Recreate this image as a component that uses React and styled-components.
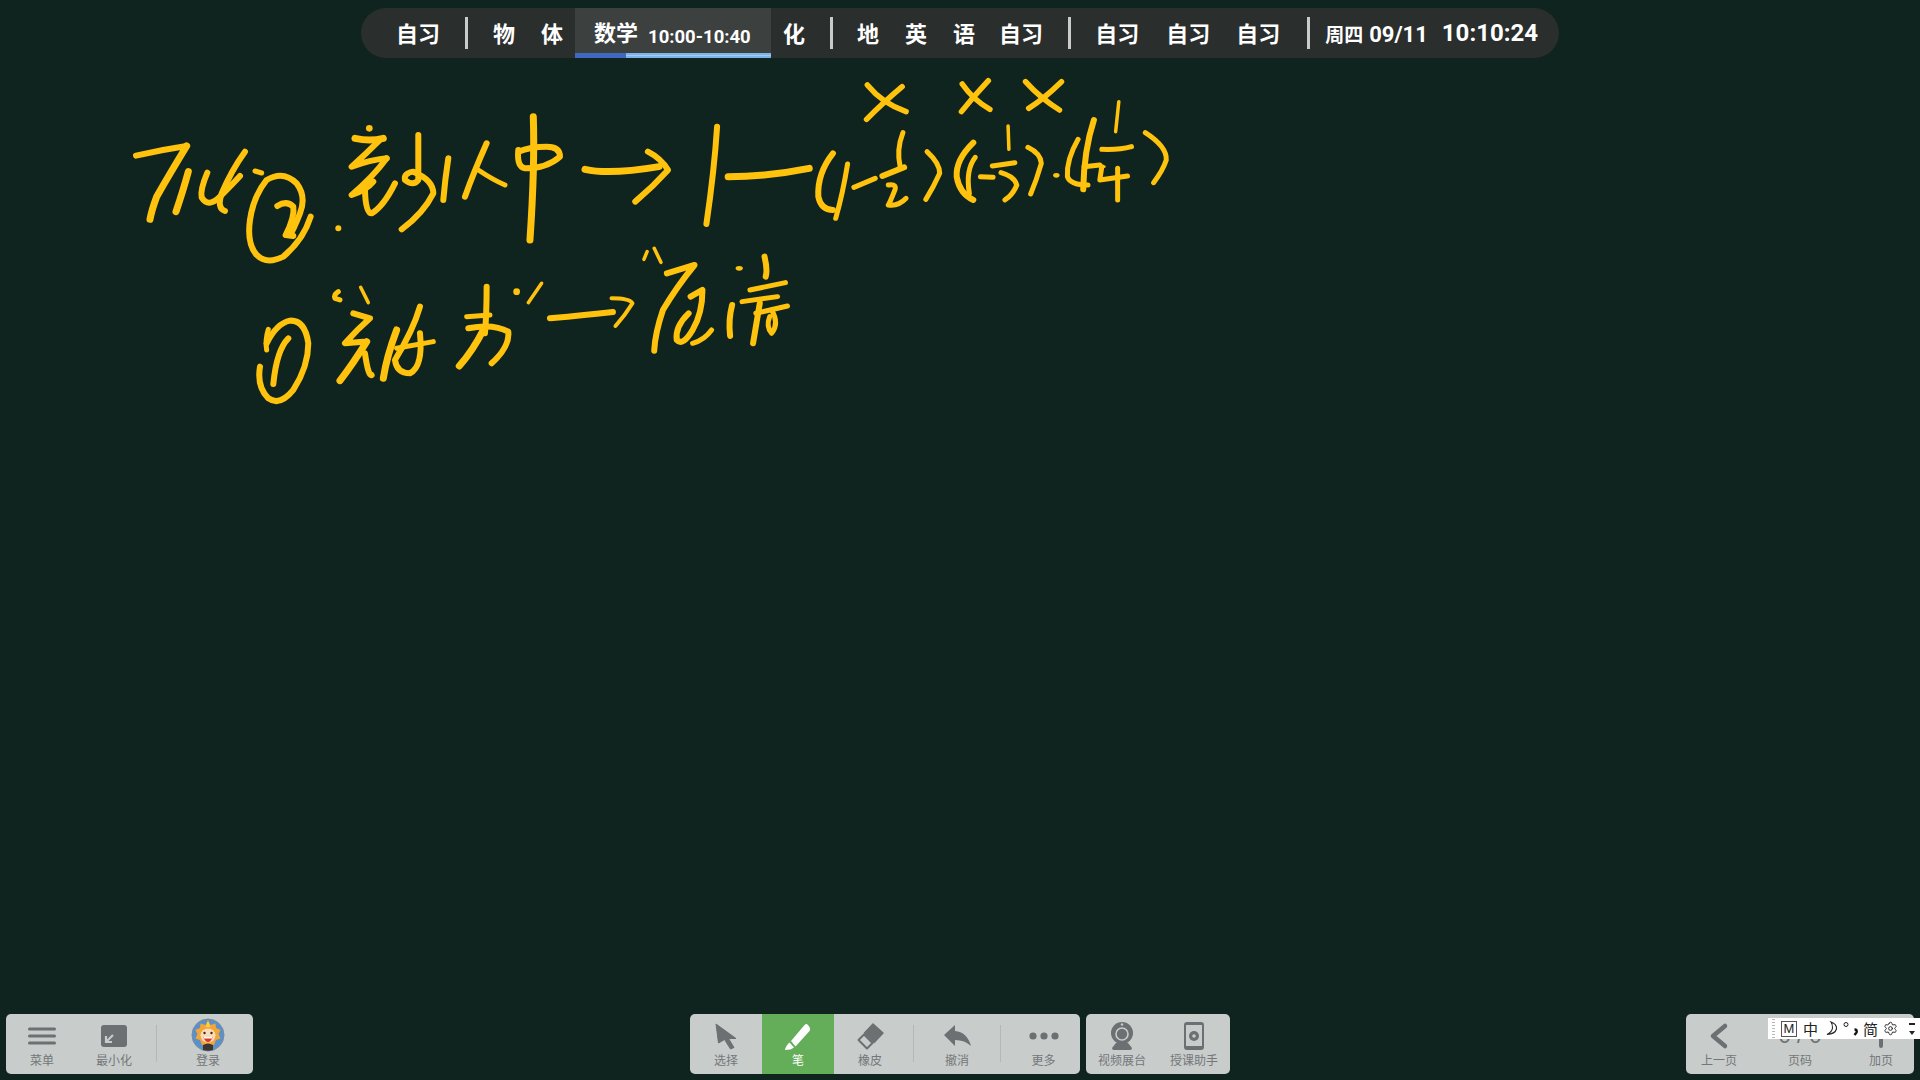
import React from "react";
import styled, { createGlobalStyle } from "styled-components";
import { Settings } from "lucide-react";

const GlobalStyle = createGlobalStyle`
    html, body {
        margin: 0;
        padding: 0;
        background: #10241f;
        overflow: hidden;
    }
`;

const Page = styled.div`
    position: relative;
    width: 1920px;
    height: 1080px;
    display: flex;
    flex-direction: column;
    justify-content: space-between;
    font-family: "Noto Sans CJK SC", "Noto Sans", sans-serif;
    background: #10241f;
`;

const InkLayer = styled.svg`
    position: absolute;
    left: 0;
    top: 0;
    width: 1920px;
    height: 1080px;
    pointer-events: none;

    path {
        fill: none;
        stroke: #ffc30d;
        stroke-linecap: round;
        stroke-linejoin: round;
        vector-effect: non-scaling-stroke;
    }

    circle {
        fill: #ffc30d;
    }
`;

const ScheduleBar = styled.div`
    align-self: flex-start;
    margin: 8px 0 0 361px;
    width: 1198px;
    height: 50px;
    box-sizing: border-box;
    padding-left: 35px;
    display: flex;
    align-items: center;
    background: #2a2e2d;
    border-radius: 25px;
    color: #fff;
    font-weight: 700;
    font-size: 22px;
    overflow: hidden;
`;

const Period = styled.span`
    margin-left: ${({ $gap }) => $gap || 0}px;
    line-height: 48px;
    padding-bottom: 2px;
    white-space: nowrap;
`;

const BarDivider = styled.span`
    margin-left: ${({ $gap }) => $gap}px;
    width: 3px;
    height: 32px;
    background: #c9cccb;
    flex: none;
`;

const CurrentPeriod = styled.div`
    margin-left: ${({ $gap }) => $gap}px;
    width: 196px;
    height: 50px;
    display: flex;
    flex-direction: column;
    background: #3c403f;
    flex: none;
`;

const CurrentLabel = styled.div`
    height: 45px;
    box-sizing: border-box;
    padding: 1px 0 0 19px;
    display: flex;
    align-items: center;
    white-space: nowrap;
`;

const CurrentTime = styled.span`
    margin-left: 10px;
    font-family: "Roboto", sans-serif;
    font-size: 18.5px;
    font-weight: 700;
    padding-top: 11px;
`;

const Progress = styled.div`
    height: 5px;
    display: flex;
    background: repeating-linear-gradient(
        to bottom,
        #7db3ea 0,
        #7db3ea 2px,
        #a4cbef 2px,
        #a4cbef 3px
    );
`;

const ProgressDone = styled.div`
    background: #4068c0;
`;

const DateText = styled.span`
    margin-left: ${({ $gap }) => $gap}px;
    font-size: 19px;
    white-space: nowrap;
`;

const DateDigits = styled.span`
    margin-left: 6px;
    font-family: "Roboto", sans-serif;
    font-size: 22px;
`;

const ClockText = styled.span`
    margin-left: 14px;
    font-family: "Roboto", sans-serif;
    font-size: 24px;
    white-space: nowrap;
`;

const BottomRow = styled.div`
    display: flex;
    align-items: flex-end;
    padding: 0 6px 6px;
`;

const ToolGroup = styled.div`
    display: flex;
    height: 60px;
    margin-left: ${({ $gap }) => ($gap === "auto" ? "auto" : `${$gap || 0}px`)};
    background: #c8ccca;
    border-radius: 5px;
    overflow: hidden;
`;

const Tool = styled.div`
    width: ${({ $w }) => $w || 72}px;
    box-sizing: border-box;
    padding-top: 3px;
    padding-left: ${({ $shift }) => $shift || 0}px;
    display: flex;
    flex-direction: column;
    align-items: center;
    flex: none;
    background: ${({ $active }) => ($active ? "#64ae5a" : "transparent")};
    color: ${({ $active }) => ($active ? "#fff" : "#73777a")};
`;

const ToolIcon = styled.svg`
    display: block;
    width: 36px;
    height: 35px;
    flex: none;
`;

const PageCount = styled.div`
    height: 35px;
    line-height: 38px;
    font-family: "Liberation Sans", sans-serif;
    font-size: 22px;
    color: #6c7072;
    white-space: nowrap;
`;

const ToolLabel = styled.span`
    font-size: 12px;
    line-height: 16px;
    white-space: nowrap;
`;

const ToolDivider = styled.span`
    width: 1px;
    height: 37px;
    margin: 11px 0 0 ${({ $gap }) => $gap || 0}px;
    background: #b4b8b6;
    flex: none;
`;

const ImeBar = styled.div`
    position: absolute;
    right: 0;
    top: 1018px;
    width: 152px;
    height: 21px;
    display: flex;
    align-items: center;
    background: #fff;
    color: #222;
    font-size: 15px;
    line-height: 21px;
    overflow: hidden;
`;

const ImeHandle = styled.span`
    width: 3px;
    height: 19px;
    margin-left: 4px;
    background: repeating-linear-gradient(
        to bottom,
        #b9b9b9 0,
        #b9b9b9 1px,
        transparent 1px,
        transparent 3px
    );
    flex: none;
`;

const ImeMode = styled.span`
    width: 14px;
    height: 14px;
    margin-left: 6px;
    border: 1px solid #555;
    font-family: "Liberation Sans", sans-serif;
    font-size: 13px;
    line-height: 14px;
    text-align: center;
    flex: none;
`;

const ImeGlyph = styled.span`
    margin-left: ${({ $gap }) => $gap}px;
    flex: none;
`;

const ImeIcon = styled.svg`
    margin-left: ${({ $gap }) => $gap}px;
    flex: none;
`;

const ImeGear = styled(Settings)`
    margin-left: 5px;
    flex: none;
`;

const ImeMenu = styled.span`
    margin-left: 10px;
    width: 7px;
    height: 12px;
    display: flex;
    flex-direction: column;
    justify-content: space-between;
    align-items: center;
    flex: none;

    &::before {
        content: "";
        width: 6px;
        height: 2px;
        background: #222;
    }

    &::after {
        content: "";
        border-left: 3px solid transparent;
        border-right: 3px solid transparent;
        border-top: 4px solid #222;
    }
`;

// first part of the ink, traced in 3x crop coordinates
const inkLeft = [
    // 7.14
    ["M48 167Q120 150 200 138", 6],
    ["M200 138Q150 220 110 290Q95 330 90 358", 7],
    ["M205 215Q190 270 168 335", 7],
    ["M262 218Q240 270 245 292Q265 325 300 290Q340 250 360 228", 6],
    ["M375 155Q335 210 305 280Q290 325 315 333", 6],
    ["M405 213L425 219", 5],
    // circled 2
    ["M572 350Q550 420 490 470Q440 495 410 465Q380 430 390 360Q400 290 440 240Q490 210 530 250Q560 290 540 340Q520 390 510 405", 6],
    ["M472 318Q500 300 520 320Q525 350 497 405L520 408", 6],
    // first line of characters
    ["M705 115Q750 125 790 115", 7],
    ["M780 120Q740 160 695 200Q750 180 800 175", 6],
    ["M800 175Q760 230 695 285Q740 270 760 245", 6],
    ["M735 260Q735 340 755 340Q790 320 825 250", 6],
    ["M895 105Q895 200 895 240Q880 260 855 240Q850 220 880 215Q940 240 940 280Q910 340 845 388", 6],
    ["M985 175Q975 240 970 300", 6],
    ["M1100 130Q1060 220 1035 290", 6],
    ["M1075 210Q1120 240 1155 255", 5],
    ["M1240 50Q1245 200 1230 420", 7],
    ["M1195 150Q1190 200 1215 205Q1280 205 1320 170Q1320 140 1280 140Q1230 140 1195 155", 6],
    // second line
    ["M655 575Q640 585 645 595L660 600", 5],
    ["M722 562L745 608", 3.5],
    ["M420 800Q410 860 445 895Q480 920 520 870Q565 800 565 730Q555 660 510 662Q470 670 440 730", 6],
    ["M445 688Q435 720 440 750", 5],
    ["M505 715Q470 750 460 852", 6],
    ["M700 640L750 655Q710 690 675 730L730 725", 6],
    ["M740 725Q700 790 660 842", 7],
    ["M735 760Q745 830 755 825", 6],
    ["M830 690Q800 770 790 835", 7],
    ["M900 620Q880 690 825 780Q830 820 870 820Q910 800 900 700", 6],
    ["M830 745L940 725", 5],
    ["M1100 560Q1100 640 1095 700", 6],
    ["M1040 650L1110 645", 5],
    ["M1045 685Q1120 670 1165 695Q1170 740 1115 790", 6],
    ["M1090 690Q1060 750 1018 798", 7],
    ["M1265 550L1225 608", 3.5],
    ["M1290 655Q1400 645 1479 636", 6],
];

const inkLeftDots = [
    [748, 85, 10],
    [655, 385, 9],
    [1190, 575, 10],
];

// second part, crop was squeezed on x so it gets its own scale
const inkRight = [
    // arrow
    ["M38 298Q100 315 225 290", 7],
    ["M197 245Q230 265 248 300Q210 350 165 395", 6],
    ["M372 170Q365 300 345 462", 6],
    ["M400 320Q500 320 605 295", 7],
    // (1 - 1/2)
    ["M665 250Q625 310 628 380Q635 420 665 420", 6],
    ["M702 282Q690 370 672 445", 5],
    ["M718 352L772 325", 5],
    ["M842 188Q825 240 835 290", 5],
    ["M790 318L845 292", 6],
    ["M805 345Q830 340 820 365Q810 395 805 405Q830 410 850 385", 5],
    ["M903 245Q935 280 935 310Q920 350 900 388", 5],
    // crosses
    ["M752 45Q790 100 850 125", 5.5],
    ["M840 50Q790 100 750 148", 5.5],
    ["M992 42Q1020 90 1062 118", 5.5],
    ["M1058 32Q1020 80 990 125", 5.5],
    ["M1152 35Q1190 85 1238 120", 5.5],
    ["M1243 35Q1200 85 1160 115", 5.5],
    // (1 - 1/3)
    ["M1020 218Q975 270 978 320Q985 370 1020 390", 6],
    ["M1025 262Q1000 300 1010 370", 5],
    ["M1038 320L1070 322", 5],
    ["M1108 168L1110 238", 3.5],
    ["M1068 288L1125 278", 5],
    ["M1090 308Q1125 320 1130 345Q1120 375 1100 390", 5],
    ["M1158 232Q1190 250 1192 280Q1180 330 1165 372", 5],
    // (1 - 1/4)
    ["M1285 208Q1255 270 1258 320Q1265 345 1310 345", 5],
    ["M1325 150Q1300 240 1298 358", 6],
    ["M1300 290L1340 285", 5],
    ["M1388 95L1380 185", 3.5],
    ["M1345 238Q1390 240 1420 230", 5],
    ["M1345 290L1340 330L1410 318", 5],
    ["M1385 295L1385 390", 5],
    ["M1455 188Q1510 230 1508 270Q1500 300 1476 338", 5],
    // second line, right side
    ["M105 685Q150 685 158 700Q140 735 115 768", 4],
    ["M195 545L187 568", 3.5],
    ["M213 535L230 577", 3.5],
    ["M245 610L315 585Q270 650 235 720Q215 790 213 842", 6],
    ["M305 680L335 660Q335 730 310 780Q285 830 270 810Q265 770 300 730", 6],
    ["M310 820Q340 810 358 780", 5],
    ["M410 705Q400 750 405 798", 6],
    ["M492 560Q500 600 495 620", 6],
    ["M455 660L545 638", 5],
    ["M435 695L525 680", 5],
    ["M480 700Q470 770 463 820", 6],
    ["M470 730L550 708", 5],
    ["M510 720Q530 760 510 790Q495 770 505 740", 5],
];

const Ink = () => (
    <InkLayer viewBox="0 0 1920 1080">
        <g transform="translate(120 100) scale(0.3333)">
            {inkLeft.map(([d, w]) => (
                <path key={d} d={d} strokeWidth={w} />
            ))}
            {inkLeftDots.map(([cx, cy, r]) => (
                <circle key={cx} cx={cx} cy={cy} r={r} />
            ))}
        </g>
        <g transform="translate(570 70) scale(0.3954 0.3333)">
            {inkRight.map(([d, w]) => (
                <path key={d} d={d} strokeWidth={w} />
            ))}
            <ellipse cx="1230" cy="316" rx="8" ry="7" fill="#ffc30d" />
            <ellipse cx="1350" cy="290" rx="5" ry="4" fill="#ffc30d" />
            <ellipse cx="428" cy="595" rx="9" ry="7" fill="#ffc30d" />
        </g>
    </InkLayer>
);

const Schedule = () => (
    <ScheduleBar>
        <Period>自习</Period>
        <BarDivider $gap={25} />
        <Period $gap={25}>物</Period>
        <Period $gap={26}>体</Period>
        <CurrentPeriod $gap={12}>
            <CurrentLabel>
                数学
                <CurrentTime>10:00-10:40</CurrentTime>
            </CurrentLabel>
            <Progress>
                <ProgressDone style={{ width: `${(51 / 196) * 100}%` }} />
            </Progress>
        </CurrentPeriod>
        <Period $gap={12}>化</Period>
        <BarDivider $gap={25} />
        <Period $gap={24}>地</Period>
        <Period $gap={26}>英</Period>
        <Period $gap={26}>语</Period>
        <Period $gap={24}>自习</Period>
        <BarDivider $gap={25} />
        <Period $gap={24}>自习</Period>
        <Period $gap={27}>自习</Period>
        <Period $gap={26}>自习</Period>
        <BarDivider $gap={27} />
        <DateText $gap={15}>
            周四
            <DateDigits>09/11</DateDigits>
        </DateText>
        <ClockText>10:10:24</ClockText>
    </ScheduleBar>
);

const ICON_GRAY = "#6c7072";
const PANEL = "#c8ccca";

const Icon = ({ children }) => <ToolIcon viewBox="0 0 36 35">{children}</ToolIcon>;

const MenuIcon = () => (
    <Icon>
        <path
            d="M5.5 12H30.5M5.5 19H30.5M5.5 26H30.5"
            stroke={ICON_GRAY}
            strokeWidth="3"
            strokeLinecap="round"
        />
    </Icon>
);

const MinimizeIcon = () => (
    <Icon>
        <rect x="5" y="8" width="26" height="22" rx="3" fill={ICON_GRAY} />
        <path d="M17 18L10.5 24.5M10 19V25H16" fill="none" stroke={PANEL} strokeWidth="2.2" />
    </Icon>
);

const AvatarIcon = () => (
    <Icon>
        <circle cx="18" cy="18" r="16" fill="#5a90cb" stroke="#7b8c9c" strokeWidth="1" />
        <path
            d="M18 3L20.5 8L25.5 6.5L26 11L30.5 13L28.5 17L30.5 21.5L26 23L24 28H12L10 23L5.5 21.5L7.5 17L5.5 13L10 11L10.5 6.5L15.5 8Z"
            fill="#f6a534"
        />
        <path d="M18 4L20.5 10H15.5Z" fill="#fdd23c" />
        <ellipse cx="18" cy="18.5" rx="7.5" ry="7" fill="#fbdcb8" />
        <circle cx="14.5" cy="16" r="1.2" fill="#3a2a20" />
        <circle cx="21.5" cy="16" r="1.2" fill="#3a2a20" />
        <path d="M13.5 20H22.5Q21 25 18 25Q15 25 13.5 20Z" fill="#d8352f" />
        <path d="M14 20H22V21.5H14Z" fill="#fff" />
        <path d="M13 33V28Q18 25 23 28V33Q18 34.5 13 33Z" fill="#3b3430" />
    </Icon>
);

const SelectIcon = () => (
    <Icon>
        <path
            d="M8 7L28 21.5L20.5 21.5L26 30.5L22.5 32L16.5 22.5L10.5 26Z"
            fill={ICON_GRAY}
            stroke={ICON_GRAY}
            strokeWidth="1"
            strokeLinejoin="round"
        />
    </Icon>
);

const PenIcon = () => (
    <Icon>
        <path
            d="M11 24L25 7.5Q26.5 6.5 28 8L30 11Q30.5 12.5 29.5 14L15.5 29.5Z"
            fill="#fff"
        />
        <path d="M9.5 25.5L14 30.5Q11 33 5 33Q6 28 9.5 25.5Z" fill="#fff" />
    </Icon>
);

const EraserIcon = () => (
    <Icon>
        <path
            d="M12.5 16L21 7L31 16L22 25.5Z"
            fill={ICON_GRAY}
            stroke={ICON_GRAY}
            strokeWidth="1.5"
            strokeLinejoin="round"
        />
        <path
            d="M12 17.5L6.5 23L15 31.5L20.5 26Z"
            fill="none"
            stroke={ICON_GRAY}
            strokeWidth="2"
            strokeLinejoin="round"
        />
    </Icon>
);

const UndoIcon = () => (
    <Icon>
        <path d="M5 18L16 8V14Q28 15 32 29Q26 23 16 23V29Z" fill={ICON_GRAY} strokeLinejoin="round" />
    </Icon>
);

const MoreIcon = () => (
    <Icon>
        <circle cx="7" cy="19" r="3.6" fill={ICON_GRAY} />
        <circle cx="18" cy="19" r="3.6" fill={ICON_GRAY} />
        <circle cx="29" cy="19" r="3.6" fill={ICON_GRAY} />
    </Icon>
);

const WebcamIcon = () => (
    <Icon>
        <path d="M12 26H24L28 31Q28 33 26 33H10Q8 33 8 31Z" fill={ICON_GRAY} />
        <circle cx="18" cy="16" r="11" fill={ICON_GRAY} />
        <circle cx="18" cy="17" r="6" fill="none" stroke={PANEL} strokeWidth="1.6" />
        <circle cx="18" cy="7.5" r="1.2" fill={PANEL} />
    </Icon>
);

const TabletIcon = () => (
    <Icon>
        <rect x="8" y="5" width="20" height="28" rx="3" fill={ICON_GRAY} />
        <rect x="10" y="8" width="16" height="21" fill={PANEL} />
        <circle cx="18" cy="19" r="5" fill={ICON_GRAY} />
        <circle cx="18" cy="19" r="1.8" fill={PANEL} />
    </Icon>
);

const PrevIcon = () => (
    <Icon>
        <path
            d="M24 9L12 19L24 29"
            fill="none"
            stroke={ICON_GRAY}
            strokeWidth="4.5"
            strokeLinecap="round"
            strokeLinejoin="round"
        />
    </Icon>
);

const PlusIcon = () => (
    <Icon>
        <path d="M18 8V29M7 19H29" stroke={ICON_GRAY} strokeWidth="4" strokeLinecap="round" />
    </Icon>
);

const Toolbars = () => (
    <BottomRow>
        <ToolGroup>
            <Tool>
                <MenuIcon />
                <ToolLabel>菜单</ToolLabel>
            </Tool>
            <Tool>
                <MinimizeIcon />
                <ToolLabel>最小化</ToolLabel>
            </Tool>
            <ToolDivider $gap={6} />
            <Tool $w={96} $shift={6}>
                <AvatarIcon />
                <ToolLabel>登录</ToolLabel>
            </Tool>
        </ToolGroup>
        <ToolGroup $gap={437}>
            <Tool>
                <SelectIcon />
                <ToolLabel>选择</ToolLabel>
            </Tool>
            <Tool $active>
                <PenIcon />
                <ToolLabel>笔</ToolLabel>
            </Tool>
            <Tool>
                <EraserIcon />
                <ToolLabel>橡皮</ToolLabel>
            </Tool>
            <ToolDivider $gap={7} />
            <Tool $w={86}>
                <UndoIcon />
                <ToolLabel>撤消</ToolLabel>
            </Tool>
            <ToolDivider />
            <Tool $w={79} $shift={6}>
                <MoreIcon />
                <ToolLabel>更多</ToolLabel>
            </Tool>
        </ToolGroup>
        <ToolGroup $gap={6}>
            <Tool>
                <WebcamIcon />
                <ToolLabel>视频展台</ToolLabel>
            </Tool>
            <Tool>
                <TabletIcon />
                <ToolLabel>授课助手</ToolLabel>
            </Tool>
        </ToolGroup>
        <ToolGroup $gap="auto">
            <Tool $w={66}>
                <PrevIcon />
                <ToolLabel>上一页</ToolLabel>
            </Tool>
            <Tool $w={96}>
                <PageCount>0 / 0</PageCount>
                <ToolLabel>页码</ToolLabel>
            </Tool>
            <Tool $w={66}>
                <PlusIcon />
                <ToolLabel>加页</ToolLabel>
            </Tool>
        </ToolGroup>
    </BottomRow>
);

const Ime = () => (
    <ImeBar>
        <ImeHandle />
        <ImeMode>M</ImeMode>
        <ImeGlyph $gap={6}>中</ImeGlyph>
        <ImeIcon $gap={7} width="13" height="15" viewBox="0 0 13 15">
            <path
                d="M6 1Q12 3 11.5 8Q10 13 2 13.5Q7 11 7.5 7Q7.5 3 6 1Z"
                fill="none"
                stroke="#222"
                strokeWidth="1.1"
            />
        </ImeIcon>
        <ImeIcon $gap={5} width="16" height="15" viewBox="0 0 16 15">
            <circle cx="3" cy="3.5" r="2" fill="none" stroke="#222" strokeWidth="1" />
            <path d="M11.5 8.5Q14.5 8.5 13.5 11.5L11.5 14" fill="none" stroke="#111" strokeWidth="2.4" />
        </ImeIcon>
        <ImeGlyph $gap={4}>简</ImeGlyph>
        <ImeGear size={15} strokeWidth={1.5} color="#222" />
        <ImeMenu />
    </ImeBar>
);

const App = () => (
    <Page>
        <GlobalStyle />
        <Ink />
        <Schedule />
        <Toolbars />
        <Ime />
    </Page>
);

export default App;
